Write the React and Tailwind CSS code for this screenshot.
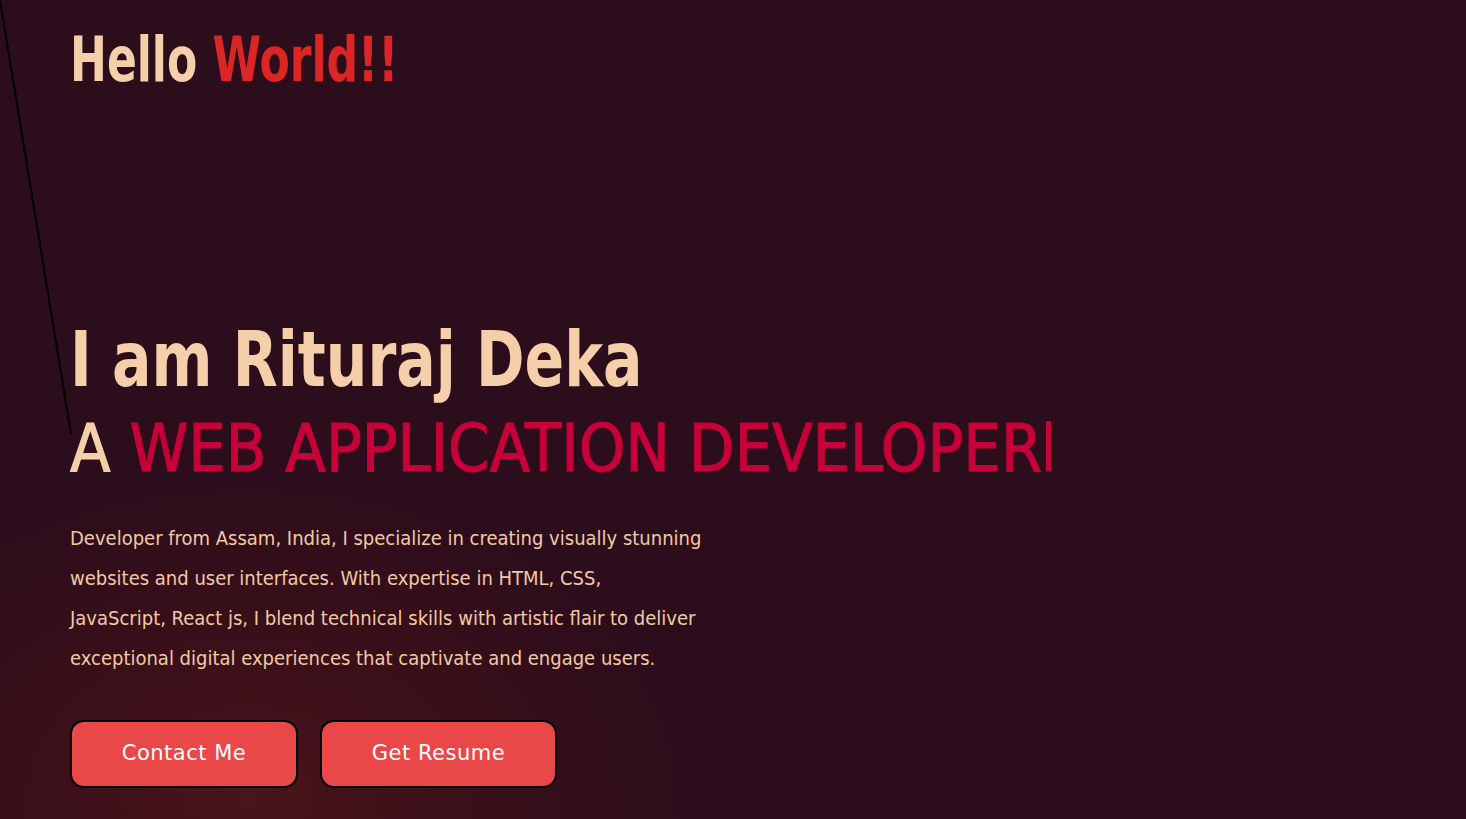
export default function App() {
  const font = { fontFamily: '"Liberation Sans Narrow", "DejaVu Sans Condensed", "Liberation Sans", sans-serif' };
  const btnFont = { fontFamily: '"DejaVu Sans", sans-serif' };

  return (
    <div
      className="relative w-full h-[819px] overflow-hidden bg-[#2c0d1b] bg-[radial-gradient(ellipse_440px_320px_at_250px_800px,#4a1419_0%,#3b1019_45%,transparent_100%)]"
      style={font}
    >
      {/* decorative diagonal line */}
      <svg className="absolute left-0 top-0 pointer-events-none" width="80" height="440" viewBox="0 0 80 440">
        <line x1="0" y1="0" x2="71" y2="434" stroke="#000" strokeWidth="2" />
      </svg>

      <header className="px-[70px] pt-[22px]">
        <h1 className="inline-block origin-left scale-x-[0.79] whitespace-nowrap text-[62px] leading-[76px] font-bold text-[#f5cfaa]">
          Hello <span className="text-[#dc2626]">World!!</span>
        </h1>
      </header>

      <main className="px-[70px] pt-[217px]">
        <h2 className="block origin-left scale-x-[0.855] whitespace-nowrap text-[76px] leading-[90px] font-bold text-[#f5cfaa]">
          I am Rituraj Deka
        </h2>
        <h3 className="flex items-center text-[66px] leading-[88px] text-[#f5cfaa] whitespace-nowrap [-webkit-text-stroke:1px_currentColor]">
          <span>
            A <span className="text-[#c8003a]">WEB APPLICATION DEVELOPER</span>
          </span>
          <span className="ml-[4px] mt-[-6px] inline-block w-[5px] h-[50px] bg-[#c8003a]" />
        </h3>

        <p className="mt-[25px] whitespace-nowrap text-[20px] leading-[40px] text-[#f2c9a4]">
          Developer from Assam, India, I specialize in creating visually stunning
          <br />
          websites and user interfaces. With expertise in HTML, CSS,
          <br />
          JavaScript, React js, I blend technical skills with artistic flair to deliver
          <br />
          exceptional digital experiences that captivate and engage users.
        </p>

        <div className="mt-[42px] flex gap-[22px]">
          <button
            className="h-[68px] w-[228px] rounded-[14px] border-2 border-black bg-[#ea4848] text-white text-[21px] tracking-[0.5px]"
            style={btnFont}
          >
            Contact Me
          </button>
          <button
            className="h-[68px] w-[237px] rounded-[14px] border-2 border-black bg-[#ea4848] text-white text-[21px] tracking-[0.5px]"
            style={btnFont}
          >
            Get Resume
          </button>
        </div>
      </main>
    </div>
  );
}
